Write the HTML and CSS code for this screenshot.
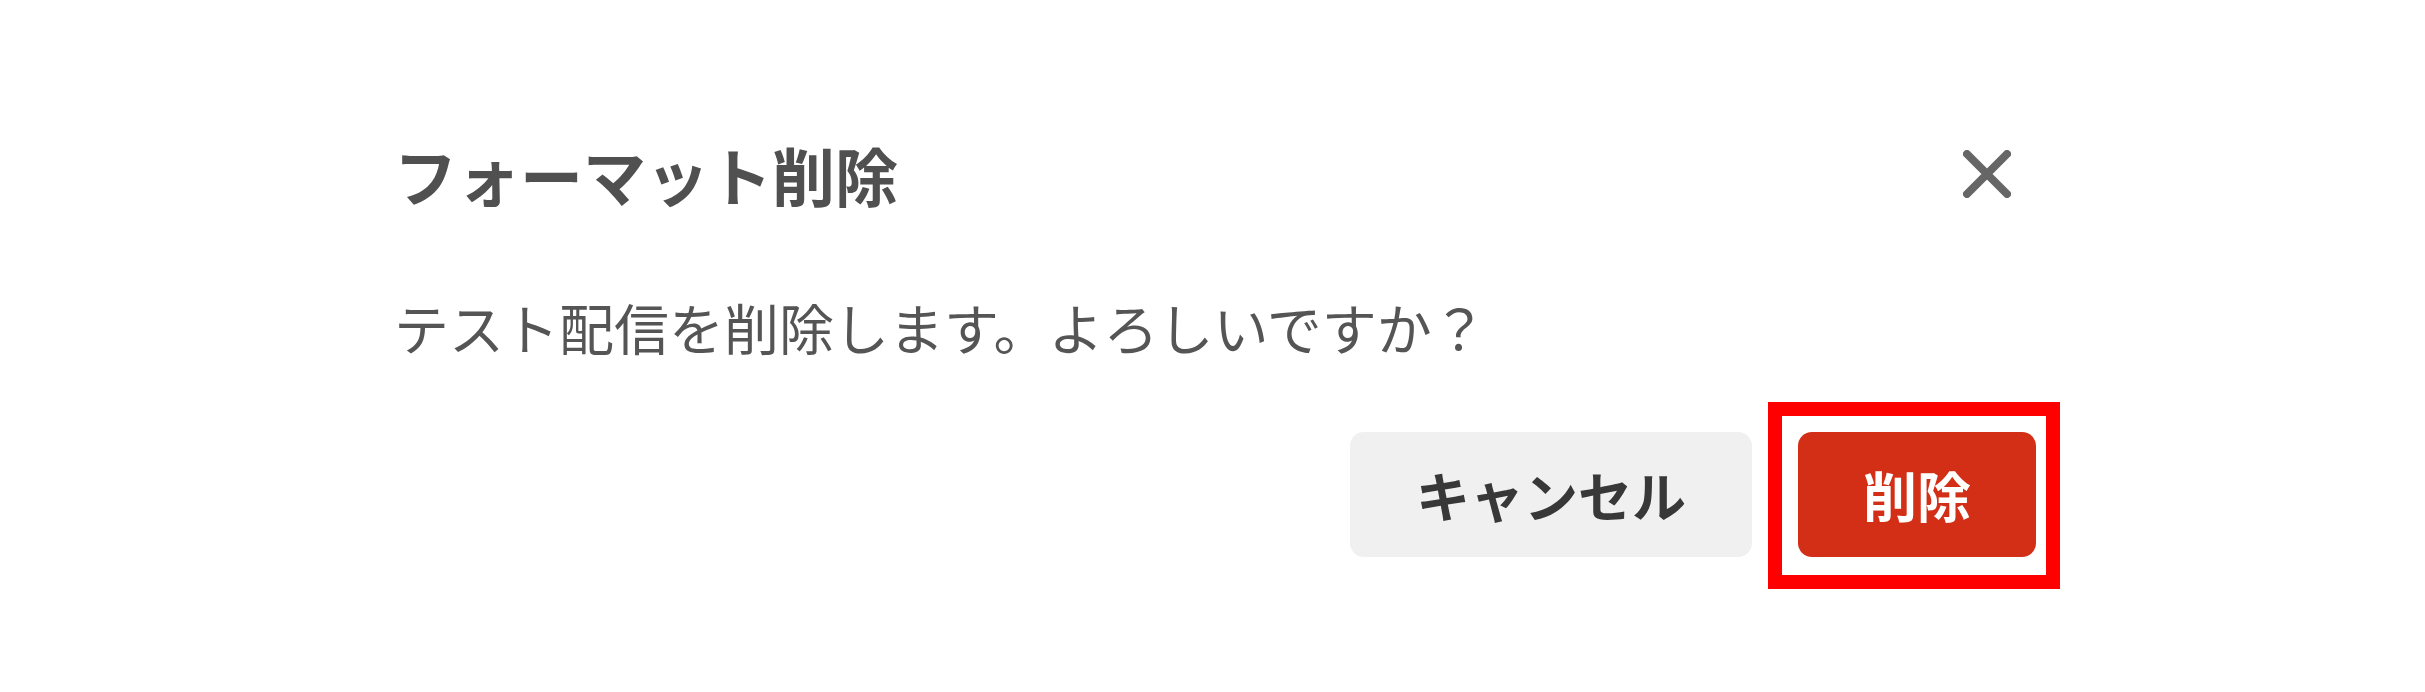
FILE: index.html
```html
<!DOCTYPE html>
<html lang="ja">
<head>
<meta charset="utf-8">
<title>フォーマット削除</title>
<link rel="stylesheet" href="styles.css">
</head>
<body>
<div class="dialog">
  <div class="header">
    <h2 class="title">フォーマット削除</h2>
    <button class="close" type="button" aria-label="閉じる">
      <svg width="48" height="48" viewBox="0 0 48 48"><path d="M4 4 L44 44 M44 4 L4 44" stroke="#666" stroke-width="8" stroke-linecap="round" fill="none"/></svg>
    </button>
  </div>
  <p class="message">テスト配信を削除します。よろしいですか？</p>
  <div class="actions">
    <button class="btn btn-cancel" type="button">キャンセル</button>
    <span class="highlight">
      <button class="btn btn-delete" type="button">削除</button>
    </span>
  </div>
</div>
</body>
</html>
```
FILE: styles.css
```css
html, body {
  margin: 0;
  background: #ffffff;
}
body {
  min-height: 692px;
  font-family: "Noto Sans CJK JP", "Noto Sans", sans-serif;
}
.dialog {
  width: 1642px;
  padding: 126px 0 135px 394px;
}
.header {
  display: flex;
  justify-content: space-between;
  align-items: center;
  height: 96px;
}
.title {
  margin: 0;
  font-size: 63px;
  line-height: 96px;
  font-weight: 700;
  color: #505050;
}
.close {
  width: 96px;
  height: 96px;
  margin-right: 1px;
  padding: 0;
  border: none;
  background: none;
  display: flex;
  align-items: center;
  justify-content: center;
}
.message {
  margin: 62px 0 0;
  font-size: 55px;
  line-height: 84px;
  font-weight: 400;
  color: #555555;
}
.actions {
  margin-top: 64px;
  display: flex;
  justify-content: flex-end;
  gap: 46px;
}
.btn {
  display: block;
  height: 125px;
  padding: 0 66px;
  border: none;
  border-radius: 14px;
  font-family: "Noto Sans CJK JP", "Noto Sans", sans-serif;
  font-size: 54px;
  font-weight: 700;
  line-height: 1;
}
.btn-cancel {
  background: #f0f0f0;
  color: #383838;
}
.highlight {
  position: relative;
  display: block;
}
.highlight::after {
  content: "";
  position: absolute;
  top: -30px;
  left: -30px;
  right: -24px;
  bottom: -32px;
  border: 14px solid #ff0000;
  pointer-events: none;
}
.btn-delete {
  padding: 0 65px;
  background: #d22f16;
  color: #ffffff;
}
```
